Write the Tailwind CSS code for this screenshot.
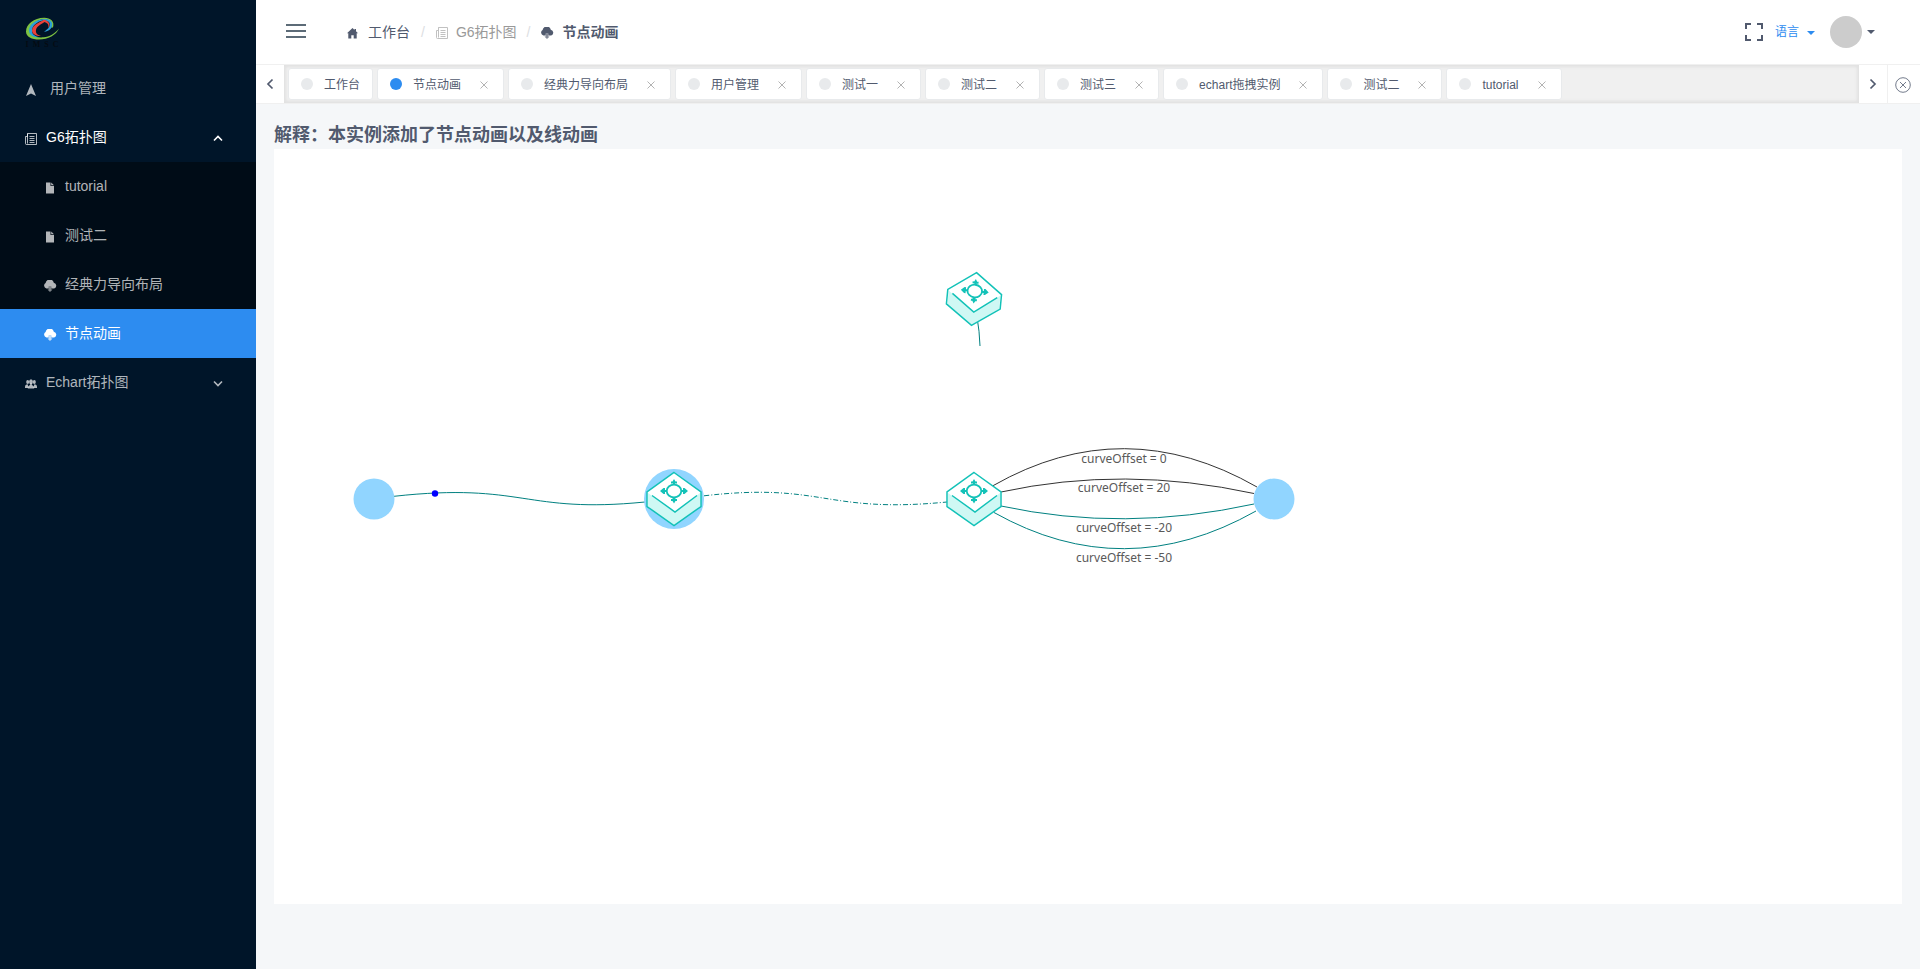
<!DOCTYPE html>
<html lang="zh-CN">
<head>
<meta charset="utf-8">
<title>节点动画</title>
<script src="https://cdn.jsdelivr.net/npm/@tailwindcss/browser@4"></script>
</head>
<body class="flex min-h-screen bg-[#f5f7f9] font-['Liberation_Sans','Noto_Sans_CJK_SC',sans-serif] text-sm text-[#515a6e]">

<svg class="hidden" aria-hidden="true">
  <symbol id="cloud" viewBox="0 0 14 12"><path fill="currentColor" d="M3.400 8.500A3 3 0 0 1 2.600 3 4.200 4.200 0 0 1 10.800 2.700 3 3 0 0 1 11.200 8.500H8.300V6.500H5.700V8.500Z"/><path fill="currentColor" opacity=".7" d="M5.700 6.500h2.600V9.500H9.600L7 12 4.400 9.500H5.700Z"/></symbol>
  <symbol id="doc" viewBox="0 0 10 12"><path fill="currentColor" d="M1 .5h4.500V4H9v7.500H1ZM6.200.5 9 3.300H6.200Z"/></symbol>
  <symbol id="paper" viewBox="0 0 12 12"><path fill="none" stroke="currentColor" d="M2.500.5h9v11h-10a1 1 0 0 1-1-1V3.500h2ZM2.500.5v10M4.500 3.500h5M4.500 5.500h5M4.500 7.500h5M4.500 9.500h5"/></symbol>
  <symbol id="close" viewBox="0 0 8 8"><path fill="none" stroke="currentColor" d="m.5.5 7 7m0-7-7 7"/></symbol>
  <symbol id="router" viewBox="-30 -30 60 60">
    <path fill="#fff" d="M0-26.500 27-7V7.500L0 26.500-27 7.500V-7Z"/>
    <path fill="#cff8f4" d="M-26-6 1 13.500 26-6V7.500L0 26.500-26 7.500Z"/>
    <path fill="none" stroke="#13c2b8" stroke-width="1.500" d="M0-26.500 27-7V7.500L0 26.500-27 7.500V-7ZM-22-3.500 1 13 23-3.500"/>
    <ellipse cy="-8" rx="7.300" ry="6.300" fill="#fff" stroke="#13c2b8" stroke-width="1.800"/>
    <path fill="#13c2b8" d="M-1-14v-1.500h-2v-2h1.500L0-20l1.500 2.500H3v2H1V-14ZM-1.500-2h3v2H3v2H1.500L0 4.500-1.500 2H-3V0h1.500ZM-7-7h-2v2h-1.500L-14-8l3.500-3H-9v2h2ZM7-7h2v2h1.500L14-8l-3.500-3H9v2H7Z"/>
  </symbol>
</svg>

<aside class="w-64 shrink-0 bg-[#001529] text-white/70">
  <div class="h-16 px-6 pt-4">
    <svg class="h-8 w-9" viewBox="0 0 36 32" role="img" aria-label="IMSC">
      <path fill="#7dc242" d="M29 11.500C31 5 26 1.500 20 1.700 10 2 2 8 2 15.500c0 5.500 6 8 13 8 9 0 17.500-4.500 20-11-4.500 5.500-9.500 8.300-15.500 8.800C11 22 6 19 6.500 14 7 8 13 3.500 19.500 3.200c6-.2 9.500 3.300 7.500 8.300Z"/>
      <path fill="#2a9fd8" d="M27.500 11.500C30 5.500 25.500 2.500 20 3 12 3.500 5 8.500 5 14.500c0 5 5 7.200 11 6.800C11 20.500 8 18.500 8 14.500 8 10 13 5.500 19 4.500c6-.5 8.500 2.500 5.500 7.500L20 16c4-1 6.500-2.500 7.500-4.500Z"/>
      <path fill="#e8413a" d="M20 3.500C18 6 8 8 8 14.500c0 3.500 3.500 5.500 9 5.500-4-1-5.500-3-5-6C12.500 10 18 8 20.500 6c3 1 5 3 3.500 6.500 3-4.500 1-7.500-4-9Z"/>
      <text x="18" y="30.500" text-anchor="middle" font-size="8" font-weight="bold" font-family="Liberation Serif, serif" fill="#050b12">I&nbsp;&nbsp;M&nbsp;&nbsp;S&nbsp;&nbsp;C</text>
    </svg>
  </div>
  <nav class="leading-[21px]">
    <a href="#" class="flex h-[49px] items-center pl-[25px]">
      <svg class="mt-0.5 size-3" viewBox="0 0 12 12"><path fill="currentColor" d="M6 0 11 12 6 9.500 1 12Z"/></svg>
      <span class="ml-[13px]">用户管理</span>
    </a>
    <a href="#" class="flex h-[49px] items-center pl-[25px] pr-8 text-white">
      <svg class="mt-0.5 size-3 text-white/70"><use href="#paper"/></svg>
      <span class="ml-[9px]">G6拓扑图</span>
      <svg class="ml-auto size-3" viewBox="0 0 12 12"><path fill="none" stroke="currentColor" stroke-width="1.600" d="m2 8.500 4-4 4 4"/></svg>
    </a>
    <div class="bg-[#000c17]">
      <a href="#" class="flex h-[49px] items-center pl-[43px]"><svg class="mt-0.5 h-3 w-3.5"><use href="#doc"/></svg><span class="ml-2">tutorial</span></a>
      <a href="#" class="flex h-[49px] items-center pl-[43px]"><svg class="mt-0.5 h-3 w-3.5"><use href="#doc"/></svg><span class="ml-2">测试二</span></a>
      <a href="#" class="flex h-[49px] items-center pl-[43px]"><svg class="mt-0.5 h-3 w-3.5"><use href="#cloud"/></svg><span class="ml-2">经典力导向布局</span></a>
      <a href="#" class="flex h-[49px] items-center bg-[#2d8cf0] pl-[43px] text-white" aria-current="page"><svg class="mt-0.5 h-3 w-3.5"><use href="#cloud"/></svg><span class="ml-2">节点动画</span></a>
    </div>
    <a href="#" class="flex h-[49px] items-center pl-[25px] pr-8">
      <svg class="mt-0.5 size-3" viewBox="0 0 12 12"><g fill="currentColor"><ellipse cx="2.700" cy="4" rx="1.500" ry="2"/><ellipse cx="9.300" cy="4" rx="1.500" ry="2"/><path d="M0 9c0-2 1-2.500 2.700-2.800L3.500 10H0ZM12 9c0-2-1-2.500-2.700-2.800L8.500 10H12Z"/><ellipse cx="6" cy="3.800" rx="1.900" ry="2.500"/><path d="M2.800 10.500c0-2.500 1-3 2.400-3.500V5.500h1.600V7c1.400.5 2.400 1 2.400 3.500Z"/></g></svg>
      <span class="ml-[9px]">Echart拓扑图</span>
      <svg class="ml-auto size-3" viewBox="0 0 12 12"><path fill="none" stroke="currentColor" stroke-width="1.600" d="m2 4.500 4 4 4-4"/></svg>
    </a>
  </nav>
</aside>

<div class="flex min-w-0 flex-1 flex-col">
  <header class="flex h-16 items-center bg-white pr-[45px]">
    <button class="ml-[30px] pb-0.5 text-[#5c6b77]" aria-label="菜单"><svg class="h-3.5 w-5" viewBox="0 0 20 14"><path stroke="currentColor" stroke-width="2" d="M0 1h20M0 7h20M0 13h20"/></svg></button>
    <nav class="ml-[41px] flex items-center leading-5" aria-label="面包屑">
      <a href="#" class="flex items-center gap-2.5"><svg class="mt-0.5 h-3 w-[11px]" viewBox="0 0 11 12"><path fill="currentColor" d="M5.500 1 7.500 2.900V2H9v2.300L11 6.300H9.700V11.500H6.700V8.300H4.300v3.200h-3V6.300H0Z"/></svg>工作台</a>
      <span class="mx-[11px] text-[#dcdee2]">/</span>
      <a href="#" class="flex items-center gap-2 text-[#999]"><svg class="mt-0.5 size-3 opacity-60"><use href="#paper"/></svg>G6拓扑图</a>
      <span class="mx-2.5 text-[#dcdee2]">/</span>
      <span class="flex items-center gap-2 font-bold"><svg class="mt-0.5 h-3 w-3.5"><use href="#cloud"/></svg>节点动画</span>
    </nav>
    <button class="ml-auto" aria-label="全屏"><svg class="size-[18px]" viewBox="0 0 18 18"><path fill="none" stroke="currentColor" stroke-width="2" d="M1 6V1h5m6 0h5v5m0 6v5h-5m-6 0H1v-5"/></svg></button>
    <button class="ml-3 flex items-center gap-2 text-xs text-[#2d8cf0]">语言<svg class="mt-0.5 h-1 w-2" viewBox="0 0 8 4"><path fill="currentColor" d="M0 0h8L4 4Z"/></svg></button>
    <button class="ml-[15px] flex items-center gap-[5px]" aria-label="用户"><span class="size-8 rounded-full bg-[#ccc]"></span><svg class="h-1 w-2" viewBox="0 0 8 4"><path fill="currentColor" d="M0 0h8L4 4Z"/></svg></button>
  </header>

  <div class="flex h-10 border-y border-[#f0f0f0] bg-white text-xs">
    <button class="flex w-7 items-center justify-center" aria-label="向左"><svg class="h-3 w-2" viewBox="0 0 8 12"><path fill="none" stroke="currentColor" stroke-width="1.700" d="M6.500 1.500 2 6l4.500 4.500"/></svg></button>
    <div class="flex min-w-0 flex-1 items-center gap-1 overflow-hidden bg-[#f0f0f0] px-1 shadow-[inset_0_0_3px_2px_rgba(100,100,100,0.1)]">
      <div class="flex h-8 shrink-0 items-center rounded-[3px] border border-[#e8eaec] bg-white px-3"><span class="mr-[11px] size-3 rounded-full bg-[#e8eaec]"></span><span class="pt-0.5">工作台</span></div>
      <div class="flex h-8 shrink-0 items-center rounded-[3px] border border-[#e8eaec] bg-white pl-3 pr-2"><span class="mr-[11px] size-3 rounded-full bg-[#2d8cf0]"></span><span class="pt-0.5">节点动画</span><button class="ml-3 flex w-[22px] justify-center pt-0.5 text-[#b3b3b3]" aria-label="关闭"><svg class="size-2"><use href="#close"/></svg></button></div>
      <div class="flex h-8 shrink-0 items-center rounded-[3px] border border-[#e8eaec] bg-white pl-3 pr-2"><span class="mr-[11px] size-3 rounded-full bg-[#e8eaec]"></span><span class="pt-0.5">经典力导向布局</span><button class="ml-3 flex w-[22px] justify-center pt-0.5 text-[#b3b3b3]" aria-label="关闭"><svg class="size-2"><use href="#close"/></svg></button></div>
      <div class="flex h-8 shrink-0 items-center rounded-[3px] border border-[#e8eaec] bg-white pl-3 pr-2"><span class="mr-[11px] size-3 rounded-full bg-[#e8eaec]"></span><span class="pt-0.5">用户管理</span><button class="ml-3 flex w-[22px] justify-center pt-0.5 text-[#b3b3b3]" aria-label="关闭"><svg class="size-2"><use href="#close"/></svg></button></div>
      <div class="flex h-8 shrink-0 items-center rounded-[3px] border border-[#e8eaec] bg-white pl-3 pr-2"><span class="mr-[11px] size-3 rounded-full bg-[#e8eaec]"></span><span class="pt-0.5">测试一</span><button class="ml-3 flex w-[22px] justify-center pt-0.5 text-[#b3b3b3]" aria-label="关闭"><svg class="size-2"><use href="#close"/></svg></button></div>
      <div class="flex h-8 shrink-0 items-center rounded-[3px] border border-[#e8eaec] bg-white pl-3 pr-2"><span class="mr-[11px] size-3 rounded-full bg-[#e8eaec]"></span><span class="pt-0.5">测试二</span><button class="ml-3 flex w-[22px] justify-center pt-0.5 text-[#b3b3b3]" aria-label="关闭"><svg class="size-2"><use href="#close"/></svg></button></div>
      <div class="flex h-8 shrink-0 items-center rounded-[3px] border border-[#e8eaec] bg-white pl-3 pr-2"><span class="mr-[11px] size-3 rounded-full bg-[#e8eaec]"></span><span class="pt-0.5">测试三</span><button class="ml-3 flex w-[22px] justify-center pt-0.5 text-[#b3b3b3]" aria-label="关闭"><svg class="size-2"><use href="#close"/></svg></button></div>
      <div class="flex h-8 shrink-0 items-center rounded-[3px] border border-[#e8eaec] bg-white pl-3 pr-2"><span class="mr-[11px] size-3 rounded-full bg-[#e8eaec]"></span><span class="pt-0.5">echart拖拽实例</span><button class="ml-3 flex w-[22px] justify-center pt-0.5 text-[#b3b3b3]" aria-label="关闭"><svg class="size-2"><use href="#close"/></svg></button></div>
      <div class="flex h-8 shrink-0 items-center rounded-[3px] border border-[#e8eaec] bg-white pl-3 pr-2"><span class="mr-[11px] size-3 rounded-full bg-[#e8eaec]"></span><span class="pt-0.5">测试二</span><button class="ml-3 flex w-[22px] justify-center pt-0.5 text-[#b3b3b3]" aria-label="关闭"><svg class="size-2"><use href="#close"/></svg></button></div>
      <div class="flex h-8 shrink-0 items-center rounded-[3px] border border-[#e8eaec] bg-white pl-3 pr-2"><span class="mr-[11px] size-3 rounded-full bg-[#e8eaec]"></span><span class="pt-0.5">tutorial</span><button class="ml-3 flex w-[22px] justify-center pt-0.5 text-[#b3b3b3]" aria-label="关闭"><svg class="size-2"><use href="#close"/></svg></button></div>
    </div>
    <button class="flex w-7 items-center justify-center" aria-label="向右"><svg class="h-3 w-2" viewBox="0 0 8 12"><path fill="none" stroke="currentColor" stroke-width="1.700" d="M1.500 1.500 6 6l-4.500 4.500"/></svg></button>
    <button class="flex w-[33px] items-center justify-center border-l border-[#f0f0f0] pr-0.5 pt-0.5" aria-label="关闭标签"><svg class="size-4" viewBox="0 0 16 16"><g fill="none" stroke="currentColor" stroke-width=".8"><circle cx="8" cy="8" r="7.300"/><path d="m5 5 6 6m0-6-6 6"/></g></svg></button>
  </div>

  <main class="px-[18px] pt-[18px]">
    <h2 class="text-lg font-bold leading-[27px]">解释：本实例添加了节点动画以及线动画</h2>
    <div class="overflow-hidden bg-white">
      <svg class="block h-[755px] w-full" role="img" aria-label="拓扑图">
        <g fill="none" stroke="#008080">
          <path d="M120 347.300C250 333 250 365 371 353"/>
          <path d="M430 346.800C550 333 550 365 673 353" stroke-dasharray="5 2 1 2"/>
          <path d="M703 168Q705.500 182 706 197"/>
          <path d="M727 357Q850 383.500 980 355"/>
          <path d="M720 363.500Q850 436.600 982 362"/>
          <g stroke="#333"><path d="M719 336.700Q850 262 983 338"/><path d="M727 343Q850 316.300 980 344.500"/></g>
        </g>
        <g fill="#91d5ff"><circle cx="100" cy="350" r="20.500"/><circle cx="400" cy="350" r="30"/><circle cx="1000" cy="350" r="20.500"/></g>
        <circle cx="161" cy="344.500" r="3.200" fill="#00f"/>
        <use href="#router" x="370" y="320" width="60" height="60"/>
        <use href="#router" x="670" y="320" width="60" height="60"/>
        <use href="#router" x="670" y="120" width="60" height="60" transform="rotate(5.500 700 150)"/>
        <g fill="#595959" font-size="12" font-family="Noto Sans, sans-serif" text-anchor="middle">
          <text x="850" y="314">curveOffset = 0</text>
          <text x="850" y="343">curveOffset = 20</text>
          <text x="850" y="383">curveOffset = -20</text>
          <text x="850" y="413">curveOffset = -50</text>
        </g>
      </svg>
    </div>
  </main>
</div>
</body>
</html>
